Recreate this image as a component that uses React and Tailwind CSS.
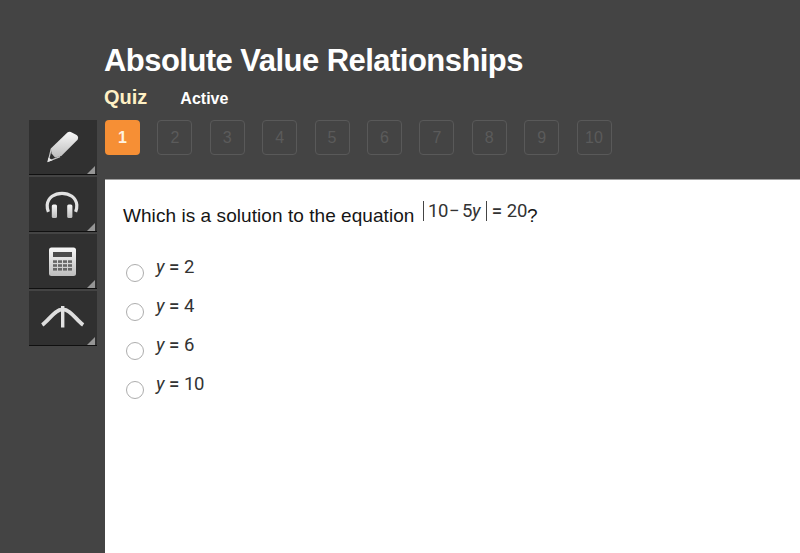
import React, { useState } from "react";

const questions = [1, 2, 3, 4, 5, 6, 7, 8, 9, 10];
const answers = ["2", "4", "6", "10"];

function Gradient({ id }) {
    return (
        <defs>
            <linearGradient id={id} x1="0" y1="0" x2="0" y2="1">
                <stop offset="0" stopColor="#f8f8f8" />
                <stop offset="1" stopColor="#bdbdbd" />
            </linearGradient>
        </defs>
    );
}

function PencilIcon() {
    return (
        <svg width="68" height="54" viewBox="0 0 68 54">
            <Gradient id="pencil" />
            <path
                d="M21.8 28.6 38.4 12.6Q40 11.2 41.8 12L47.6 15Q50 16.8 48.6 19.8L32.3 36 26 37.6 22.6 33.5Z"
                fill="url(#pencil)"
            />
            <path d="M22.2 29 19.3 41.2 31 36.6" fill="none" stroke="#c8c8c8" strokeWidth="1.2" />
            <path d="M19.4 37.5 18.4 42 23.6 40.2Z" fill="#e8e8e8" />
        </svg>
    );
}

function HeadphonesIcon() {
    return (
        <svg width="68" height="54" viewBox="0 0 68 54">
            <Gradient id="phones" />
            <path
                d="M19.4 34.8C18.4 32.5 18 31 18.2 28 19 20.5 25.5 16.3 33 16.3S47 20.5 47.8 28C48 31 47.6 32.5 46.6 34.8"
                fill="none"
                stroke="#e2e2e2"
                strokeWidth="3.2"
            />
            <rect x="22.8" y="27.5" width="5.2" height="13.5" rx="1.5" fill="url(#phones)" />
            <rect x="38.2" y="27.5" width="5.2" height="13.5" rx="1.5" fill="url(#phones)" />
        </svg>
    );
}

function CalculatorIcon() {
    return (
        <svg width="68" height="54" viewBox="0 0 68 54">
            <Gradient id="calc" />
            <rect x="20" y="13.5" width="27" height="28.5" rx="2.5" fill="url(#calc)" />
            <rect x="24" y="18" width="19" height="5" fill="#4b4b4b" />
            {[26.3, 30.2, 34].map((y) =>
                [24, 29, 34, 39].map((x) => (
                    <rect key={`${x}-${y}`} x={x} y={y} width="4" height="2.6" fill="#666" />
                ))
            )}
        </svg>
    );
}

function GraphIcon() {
    return (
        <svg width="68" height="54" viewBox="0 0 68 54">
            <path
                d="M13.2 33.8C20 29.5 25.5 18.5 33.7 18.3 41.9 18.5 47.4 29.5 54.2 33.8"
                fill="none"
                stroke="#dedede"
                strokeWidth="3.8"
            />
            <path d="M33.7 15V36.5" stroke="#e2e2e2" strokeWidth="3.4" />
        </svg>
    );
}

const tools = [
    { name: "Highlighter", Icon: PencilIcon },
    { name: "Audio", Icon: HeadphonesIcon },
    { name: "Calculator", Icon: CalculatorIcon },
    { name: "Graphing", Icon: GraphIcon },
];

function Toolbar() {
    return (
        <aside className="mt-[120px] ml-[29px] flex w-[68px] shrink-0 flex-col gap-[1.7px]">
            {tools.map(({ name, Icon }) => (
                <button
                    key={name}
                    aria-label={name}
                    className="relative h-[55.2px] w-full border-b-[1.5px] border-[#101010] bg-[#303030]"
                >
                    <Icon />
                    <svg className="absolute right-[2px] bottom-0" width="8" height="8">
                        <path d="M8 0V8H0Z" fill="#969696" />
                    </svg>
                </button>
            ))}
        </aside>
    );
}

function QuestionNav() {
    return (
        <nav className="mt-[9px] flex gap-[17.4px]">
            {questions.map((n) => (
                <span
                    key={n}
                    className={
                        n === 1
                            ? "flex size-[35px] items-center justify-center rounded-[4px] bg-[#f68f35] text-[16px] font-bold text-[#fff3e0]"
                            : "flex size-[35px] items-center justify-center rounded-[4px] border-[1.5px] border-[#595959] text-[16px] text-[#5b5b5b]"
                    }
                >
                    {n}
                </span>
            ))}
        </nav>
    );
}

function App() {
    const [selected, setSelected] = useState(null);

    return (
        <div className="flex h-[553px] w-[800px] items-start overflow-hidden bg-[#444444] font-['Liberation_Sans',Arial,sans-serif]">
            <Toolbar />
            <div className="ml-[8px] flex h-full min-w-0 flex-1 flex-col">
                <header className="h-[179px] shrink-0 pt-[43px]">
                    <h1 className="-ml-px h-[36px] text-[31px] leading-[36px] font-bold tracking-[-0.54px] whitespace-nowrap text-white">
                        Absolute Value Relationships
                    </h1>
                    <div className="mt-[7px] flex h-[25px] items-baseline gap-[33px] leading-[22px] font-bold">
                        <span className="-ml-px text-[20px] text-[#fff0c4]">Quiz</span>
                        <span className="text-[16px] text-white">Active</span>
                    </div>
                    <QuestionNav />
                </header>
                <main className="flex-1 border-t border-[#a0a0a0] bg-white pl-[18px]">
                    <p className="mt-[24px] flex h-[24px] text-[19px] leading-[24px] whitespace-nowrap text-[#151515]">
                        <span className="w-[297px] tracking-[0.06px]">
                            Which is a solution to the equation
                        </span>
                        <span className="-mt-[5px] flex h-[24px] w-[107px] font-[Roboto,sans-serif] text-[18.5px] tracking-[-0.3px] text-[#333]">
                            <span className="mt-[2px] mr-[4px] ml-[3px] h-[20px] w-px bg-[#444]" />
                            <span className="w-[21px]">10</span>
                            <span className="w-[13px]">−</span>
                            <span className="w-[10px]">5</span>
                            <span className="w-[11px] italic">y</span>
                            <span className="mt-[2px] mr-[5px] ml-[3px] h-[20px] w-px bg-[#444]" />
                            <span className="w-[15px] font-medium">=</span>
                            <span>20</span>
                        </span>
                        <span>?</span>
                    </p>
                    <div className="mt-[29px] flex flex-col">
                        {answers.map((value) => (
                            <label key={value} className="flex h-[39px] items-start">
                                <input
                                    type="radio"
                                    name="answer"
                                    value={value}
                                    checked={selected === value}
                                    onChange={() => setSelected(value)}
                                    className="mt-[7px] ml-[3px] size-[18px] appearance-none rounded-full border border-[#adadad] bg-white checked:border-[6px]"
                                />
                                <span className="ml-[12px] -mt-[2px] flex h-[24px] font-[Roboto,sans-serif] text-[18.5px] leading-[24px] tracking-[-0.4px] text-[#333]">
                                    <span className="w-[13px] italic">y</span>
                                    <span className="w-[15px] font-medium">=</span>
                                    <span>{value}</span>
                                </span>
                            </label>
                        ))}
                    </div>
                </main>
            </div>
        </div>
    );
}

export default App;
